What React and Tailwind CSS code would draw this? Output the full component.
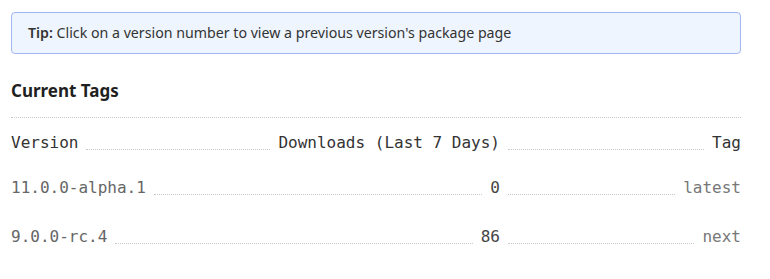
const tags = [
  { version: '11.0.0-alpha.1', downloads: '0', tag: 'latest' },
  { version: '9.0.0-rc.4', downloads: '86', tag: 'next' },
];

function Leader() {
  return <span className="mx-2 h-0 flex-1 translate-y-[2px] border-b border-dotted border-[#c8c8c8]" />;
}

function Row({ version, downloads, tag, head = false }) {
  const cell = head ? 'text-[#333]' : 'text-[#666]';
  return (
    <div className="flex items-baseline text-[16px] leading-[24px]">
      <div className="flex w-[489px] items-baseline">
        <span className={cell}>{version}</span>
        <Leader />
        <span className={head ? 'text-[#333]' : 'text-[#444]'}>{downloads}</span>
      </div>
      <Leader />
      <span className={head ? 'text-[#333]' : 'text-[#777]'}>{tag}</span>
    </div>
  );
}

export default function App() {
  return (
    <div className="w-[752px] bg-white px-[11px] pt-3 pb-6 font-['Noto_Sans',sans-serif] text-[#333]">
      <div className="rounded-[4px] border border-[#9fb6f3] bg-[#eef5ff] px-4 pt-[9px] pb-[10px] text-[14.2px] leading-[21px]">
        <strong className="font-semibold">Tip:</strong> Click on a version number to view a previous version's package page
      </div>
      <h3 className="mt-[25px] pb-[14px] text-[17px] leading-[24px] font-bold text-[#1f1f1f]">Current Tags</h3>
      <div className="border-t border-dotted border-[#c8c8c8] pt-[13px] font-['DejaVu_Sans_Mono',monospace]">
        <Row head version="Version" downloads="Downloads (Last 7 Days)" tag="Tag" />
        <div className="mt-[21px] flex flex-col gap-[25px]">
          {tags.map((t) => (
            <Row key={t.version} {...t} />
          ))}
        </div>
      </div>
    </div>
  );
}
